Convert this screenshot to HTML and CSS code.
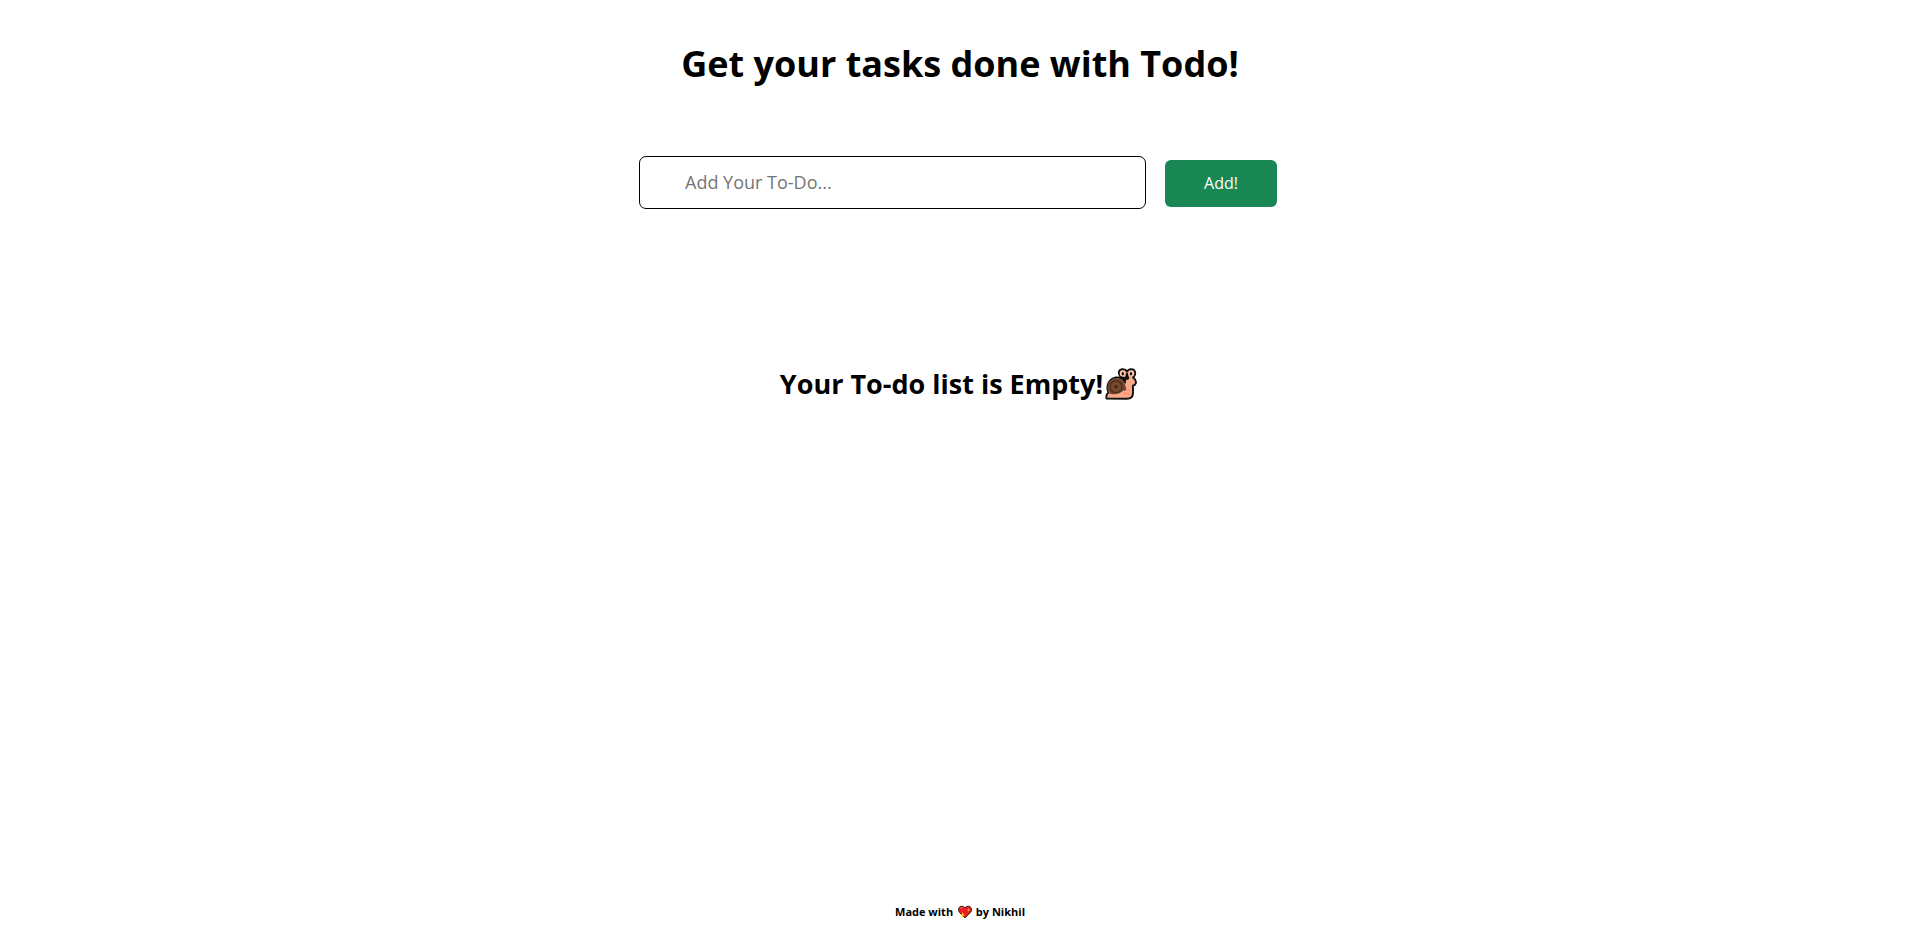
FILE: index.html
```html
<!DOCTYPE html>
<html lang="en">
<head>
<meta charset="utf-8">
<title>Todo</title>
<link rel="stylesheet" href="styles.css">
</head>
<body class="page">
<main class="main">
  <h1 class="title">Get your tasks done with Todo!</h1>
  <form class="add-form">
    <input class="todo-input" type="text" placeholder="Add Your To-Do..." aria-label="Add Your To-Do">
    <button class="add-button" type="submit">Add!</button>
  </form>
  <h2 class="empty">Your To-do list is Empty!<svg class="snail" viewBox="0 0 32 32" aria-hidden="true">
    <path d="M1.500 30.500C1 28 2 25.500 3.500 24.500C.5 18 4 10.500 11 9.500C15 9 18 11 20 14V10C14 10 11.500 2.500 16.500 1.300C19 .800 21 1.800 22 3.500C23.500 1 27 .500 29 2C31 4.500 30 7.500 28 9.500C29.500 10.500 31.500 13 30.700 15.500C30.200 17 28.500 17.500 28 17.500V25C28 29 25.500 30.700 22 30.700Z" fill="#faa98a" stroke="#10100f" stroke-width="1.900" stroke-linejoin="round"/>
    <path d="M3.500 24.500C.5 16 5 10.200 11 10C16 9.800 19.500 13 20.500 18L21.500 22L18 23C15 26 7 28 3.500 24.500Z" fill="#6f452f"/>
    <circle cx="11" cy="18.700" r="6.500" fill="#4b2e20"/>
    <circle cx="11" cy="18.700" r="5.200" fill="#79492f"/>
    <circle cx="11" cy="18.700" r="2" fill="#4b2e20"/>
    <path d="M17.500 11L21 13L20.500 16Z" fill="#10100f"/>
    <circle cx="17.500" cy="5.700" r="2.700" fill="#ffc9b0"/>
    <circle cx="26.500" cy="5.700" r="2.700" fill="#ffc9b0"/>
    <ellipse cx="17.800" cy="5.800" rx="1.200" ry="1.800" fill="#10100f"/>
    <ellipse cx="26" cy="5.800" rx="1.200" ry="1.800" fill="#10100f"/>
    <path d="M20.700 7.500C20.700 3.500 23.300 3.500 23.300 7.500L24.200 10C24 12.500 20 12.500 19.800 10Z" fill="#10100f"/>
    <circle cx="23.500" cy="22" r="1" fill="#ff8d50"/><circle cx="20" cy="25.500" r="1.200" fill="#ff8d50"/><circle cx="23.500" cy="26" r="1" fill="#ff8d50"/>
  </svg></h2>
</main>
<footer class="footer">Made with <svg class="heart" viewBox="0 0 14 14" role="img" aria-label="love">
  <path d="M7 12.800L1.500 7.500C-.8 4.500 1 1.200 3.800 1.200C5.500 1.200 6.400 2 7 3C7.600 2 8.500 1.200 10.200 1.200C13 1.200 14.800 4.500 12.500 7.500Z" fill="#ed1c24" stroke="#24100e" stroke-width=".9"/>
  <path d="M2.500 3.500Q3.500 2 5 3" fill="none" stroke="#ff7a70" stroke-width="1"/>
  <path d="M10.500 3.500L11 4.600L12 5L11 5.400L10.500 6.500L10 5.400L9 5L10 4.600ZM4.500 7L5.200 9.300L7.500 10L5.200 10.700L4.500 13L3.800 10.700L1.800 10L3.800 9.300Z" fill="#ffc91f"/>
</svg> by Nikhil</footer>
</body>
</html>
```
FILE: styles.css
```css
.page {
  display: flex;
  flex-direction: column;
  min-height: 100vh;
  margin: 0;
  background: #fff;
  color: #000;
  font-family: "Open Sans", sans-serif;
  box-sizing: border-box;
}
.main {
  display: flex;
  flex: 1;
  flex-direction: column;
  align-items: center;
  text-align: center;
}
.title {
  margin: 39px 0 67px;
  font-size: 36px;
  line-height: 50px;
}
.add-form {
  display: flex;
  align-items: center;
  justify-content: center;
  gap: 19px;
  width: 100%;
  padding-right: 4px;
  box-sizing: border-box;
}
.todo-input {
  width: 507px;
  max-width: 70%;
  height: 53px;
  padding: 0 45px 2px;
  border: 1px solid #000;
  border-radius: 7px;
  background: #fff;
  box-sizing: border-box;
  font: 18px "Open Sans", sans-serif;
}
.todo-input::placeholder {
  color: #757575;
}
.add-button {
  height: 47px;
  margin-top: 1px;
  padding: 0 39px 1px;
  border: 0;
  border-radius: 6px;
  background: #198754;
  color: #fff;
  font: 16px "Open Sans", sans-serif;
}
.empty {
  display: flex;
  align-items: center;
  gap: 2px;
  margin: 156px 0 0;
  padding-right: 3px;
  font-size: 27px;
  line-height: 38px;
}
.snail {
  width: 32px;
  height: 32px;
}
.footer {
  padding-bottom: 5px;
  font-size: 11px;
  font-weight: 700;
  line-height: 16px;
  text-align: center;
}
.heart {
  width: 14px;
  height: 14px;
  margin: 0 1px 0 2px;
  vertical-align: -3px;
}
```
